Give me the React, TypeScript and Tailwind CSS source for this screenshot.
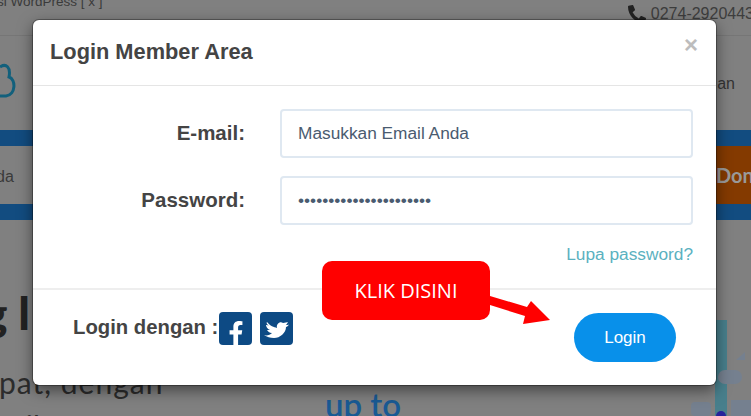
import { FaFacebookF, FaPhoneAlt } from "react-icons/fa";

const sans = { fontFamily: '"Liberation Sans", Arial, sans-serif' };

function PageBehind() {
  return (
    <div className="h-[416px] overflow-hidden bg-[#808080] font-['Lato',sans-serif] text-[#2b2b2b]">
      <div className="flex h-[36px] items-start justify-between border-b border-[#767676] font-['Liberation_Sans',sans-serif]">
        <p className="-mt-[6px] -ml-[3px] text-[13.5px] leading-[16px] text-[#3a3a3a]">si WordPress [ x ]</p>
        <div className="mt-[2px] mr-[-3px] flex items-center gap-[5px] text-[16px] text-[#3d3d3d]">
          <FaPhoneAlt className="h-[18px] w-[18px] text-[#222]" />
          <span>0274-2920443</span>
        </div>
      </div>
      <div className="flex h-[94px] items-center justify-between">
        <svg viewBox="0 0 16 40" className="h-[40px] w-[16px]" fill="none" stroke="#12607c" strokeWidth="3">
          <path d="M0 4 C6 0 11 4 9 14 C16 16 16 32 6 33 L0 33" />
        </svg>
        <span className="mr-[16px] mt-[2px] font-['Liberation_Sans',sans-serif] text-[16px] text-[#333]">an</span>
      </div>
      <div className="h-[90px] border-y-[16px] border-[#124c80]">
        <div className="flex h-full items-center justify-between font-['Liberation_Sans',sans-serif]">
          <span className="mt-[4px] -ml-[4px] text-[16px] text-[#3a3a3a]">da</span>
          <span className="flex h-full w-[35px] items-center overflow-hidden bg-[#843a00] font-['Lato',sans-serif] text-[20px] font-bold whitespace-nowrap text-[#999]">Don</span>
        </div>
      </div>
      <div className="relative flex">
        <div className="w-[325px] shrink-0">
          <p className="mt-[61px] -ml-[17px] text-[46px] font-black leading-[64px] text-[#222]">g l</p>
          <p className="mt-[19px] -ml-[1px] text-[30px] leading-[36px] tracking-[1px] text-[#2c2c2c]">pat, dengan</p>
          <p className="mt-[8px] -ml-[6px] text-[30px] leading-[36px] text-[#2c2c2c]">baik</p>
        </div>
        <p className="mt-[164px] text-[33px] font-semibold leading-[40px] text-[#195a94]">up to</p>
        <svg viewBox="0 0 60 96" className="absolute right-0 top-[100px] h-[96px] w-[60px]">
          <rect x="24" y="0" width="12" height="96" fill="#487f8c" />
          <rect x="27" y="50" width="24" height="14" rx="7" fill="#75808f" />
          <rect x="0" y="82" width="20" height="14" rx="4" fill="#75808f" />
          <path d="M45 40 L54 32 L54 40 Z" fill="#75808f" />
          <rect x="40" y="80" width="20" height="16" fill="#75808f" />
          <circle cx="30" cy="96" r="5" fill="#27239a" />
        </svg>
      </div>
    </div>
  );
}

function Field({ label, type, value }: { label: string; type: string; value: string }) {
  return (
    <div className="flex items-center">
      <label className="w-[212px] text-right text-[20.5px] font-bold text-[#444]">{label}</label>
      <input
        readOnly
        type={type}
        value={value}
        style={sans}
        className="ml-[35px] h-[49px] w-[413px] rounded border-2 border-[#dfe8f1] px-[16px] text-[17.3px] text-[#4a5b70] outline-none"
      />
    </div>
  );
}

export default function App() {
  return (
    <div className="relative h-[416px] w-[751px] overflow-hidden" style={sans}>
      <PageBehind />

      <div className="absolute left-[33px] top-[20px] h-[365px] w-[683px] rounded-md bg-white shadow-[0_5px_15px_rgba(0,0,0,0.5)] ring-1 ring-black/30">
        <div className="flex h-[66px] items-start justify-between border-b border-[#e5e5e5] pl-[17px] pr-[18px]">
          <h1 className="mt-[19px] text-[21.8px] font-bold leading-[26px] text-[#444]">Login Member Area</h1>
          <span className="mt-[13px] text-[24px] font-bold leading-[24px] text-[#bdbdbd]">×</span>
        </div>

        <div className="flex h-[202px] flex-col pt-[23px]">
          <div className="flex flex-col gap-[18px]">
            <Field label="E-mail:" type="text" value="Masukkan Email Anda" />
            <Field label="Password:" type="password" value="masukkanpasswordanda12" />
          </div>
          <a className="mt-[19px] mr-[23px] text-right text-[17.3px] leading-[20px] text-[#5bb1bf]">Lupa password?</a>
        </div>

        <div className="flex items-start justify-between border-t-2 border-[#eeeeee] pl-[40px] pr-[40px]">
          <div className="mt-[22px] flex items-center">
            <span className="-mt-[2px] w-[146px] text-[20.3px] font-bold whitespace-nowrap text-[#444]">Login dengan :</span>
            <span className="flex h-[33px] w-[33px] items-end justify-center overflow-hidden rounded-sm bg-[#0d4a84] text-white">
              <FaFacebookF className="h-[24px] w-[24px]" />
            </span>
            <span className="ml-[8px] flex h-[33px] w-[33px] items-center justify-center rounded-sm bg-[#0d4a84]">
              <svg viewBox="0 0 33 33" className="h-[33px] w-[33px]" fill="#ffffff">
                <path d="M7 10 C10 14 14 15 17 16 C16 12 20 9 23 11 C25 11 27 10 28 10 C27 11.5 27 12 26 13 C27 13 28 13 29 12.5 C28 14 27 15 26 15 C26 21 20 26 14 26 C10 26 7 25 4 23 C7 24 10 23 12 21 C9 21 8 19 7 18 C8 18 9 18 10 18 C7 17 6 14 6 13 C7 13 8 13 9 14 C7 12 6 11 7 10 Z" />
              </svg>
            </span>
          </div>
          <button className="mt-[23px] h-[49px] w-[102px] rounded-full bg-[#0890ea] text-[17px] text-white">Login</button>
        </div>
      </div>

      <div className="absolute left-[322px] top-[261px] flex h-[59px] w-[168px] items-center justify-center rounded-[10px] bg-[#ff0000] font-['Open_Sans',sans-serif] text-[20px] text-white">
        KLIK DISINI
      </div>
      <svg viewBox="0 0 70 40" className="absolute left-[488px] top-[295px] h-[40px] w-[70px]" fill="#ff0000">
        <path d="M2 1 L39 12 L43 6 L62 25 L35 29 L37 21 L2 10 Z" />
      </svg>
    </div>
  );
}
